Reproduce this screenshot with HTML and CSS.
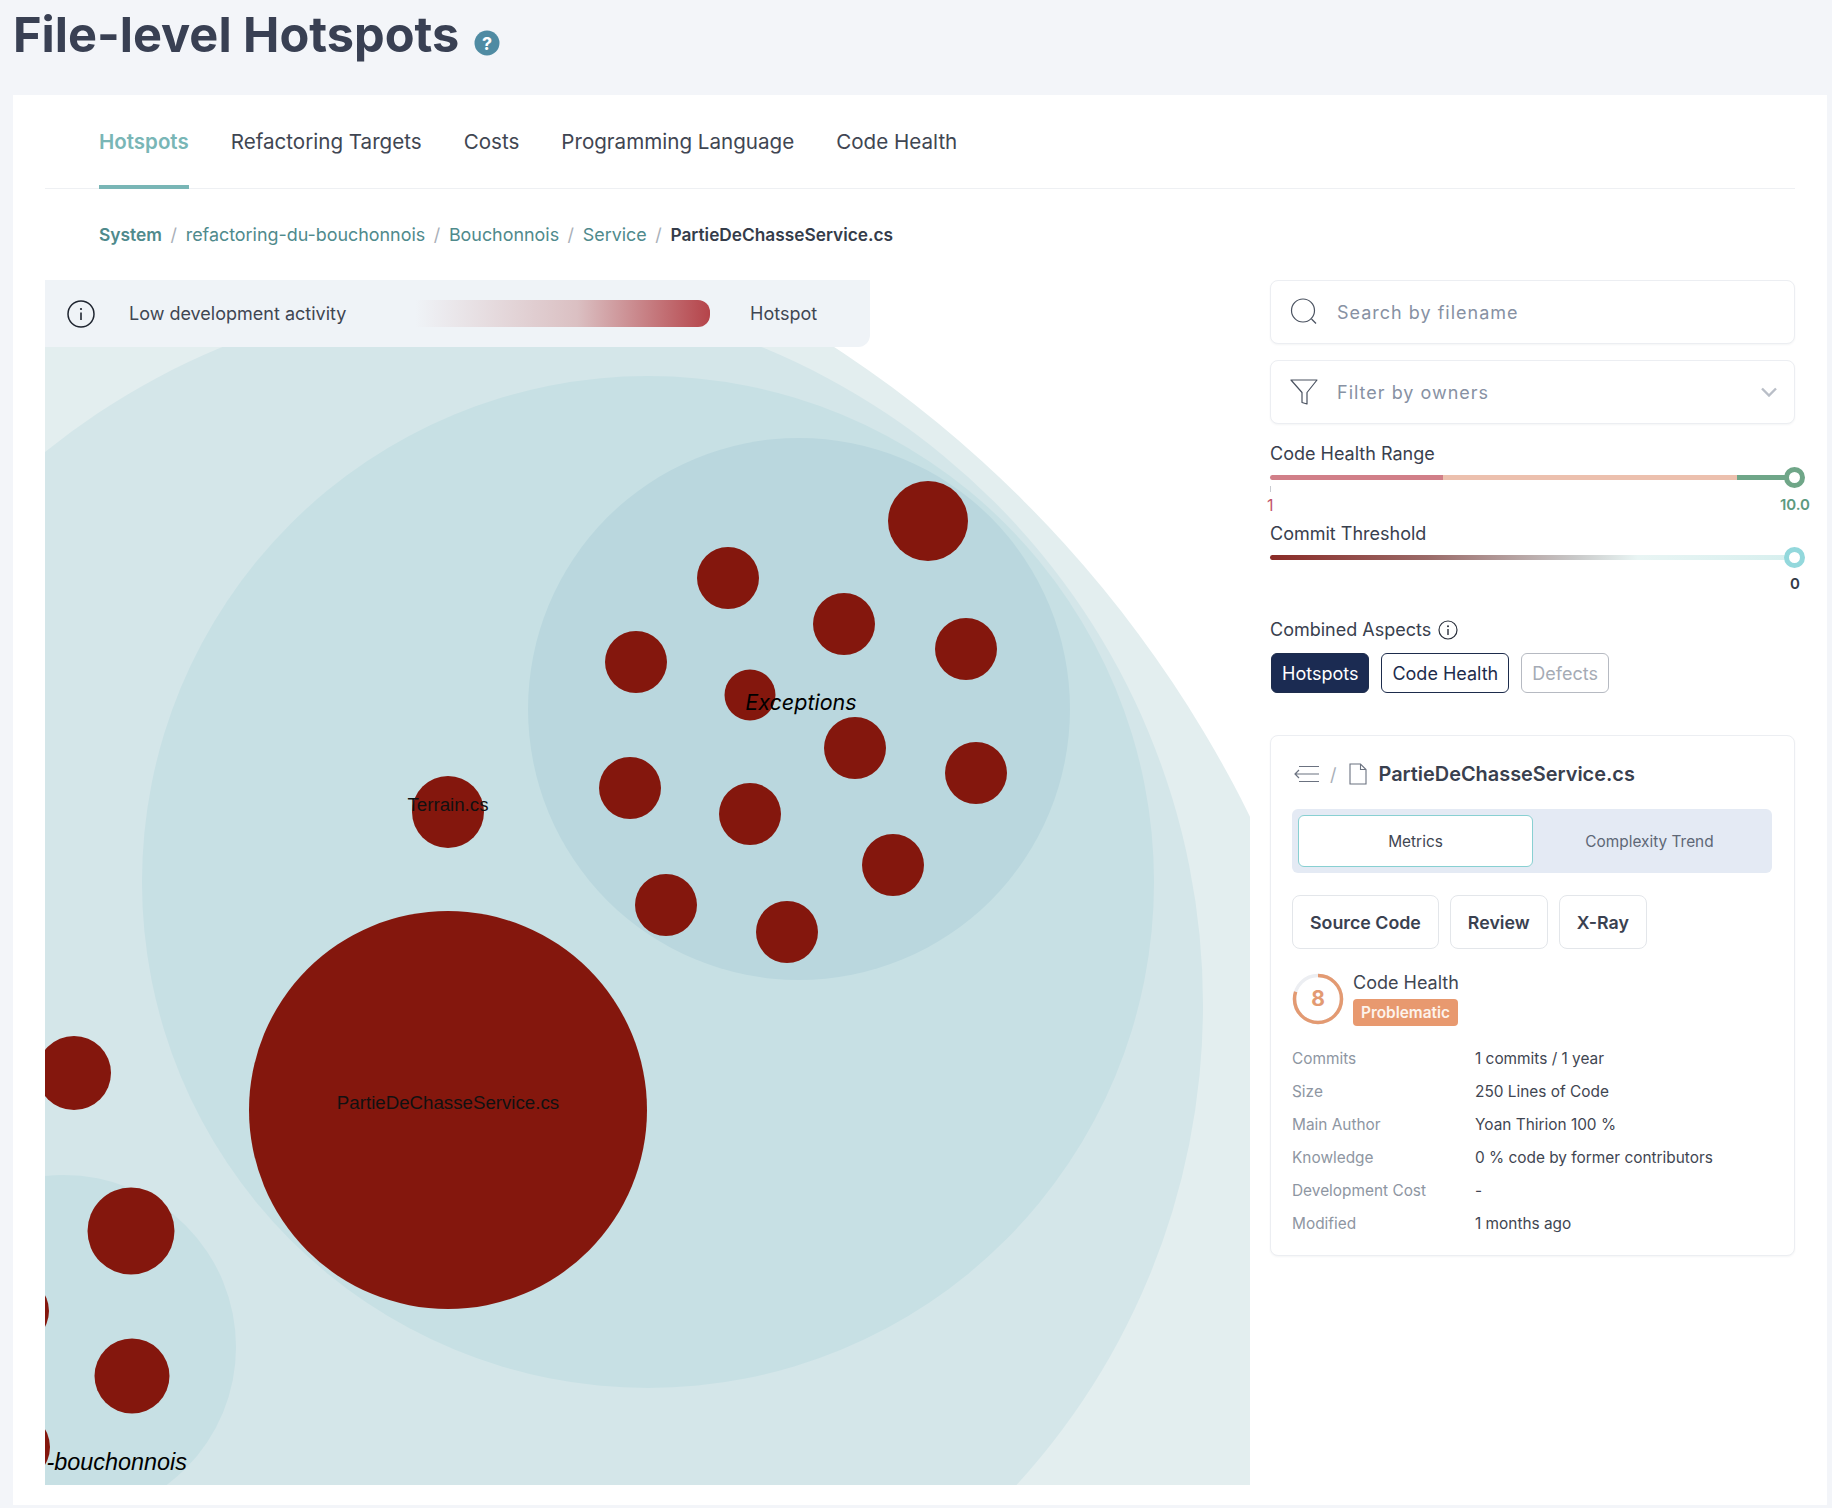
FILE: index.html
```html
<!DOCTYPE html>
<html lang="en">
<head>
  <meta charset="UTF-8" />
  <title>File-level Hotspots</title>
  <link rel="stylesheet" href="styles.css">
</head>
<body>
  <div class="page-head">
    <h1>File-level Hotspots</h1>
    <svg class="help" width="26" height="26" viewBox="0 0 26 26"><circle cx="13" cy="13" r="12.5" fill="#4f8ba3"/><text x="13" y="19.5" text-anchor="middle" class="help-mark">?</text></svg>
  </div>

  <div class="card">
    <div class="tabs">
      <a class="tab active">Hotspots</a>
      <a class="tab">Refactoring Targets</a>
      <a class="tab">Costs</a>
      <a class="tab">Programming Language</a>
      <a class="tab">Code Health</a>
    </div>

    <div class="crumbs">
      <a class="strong">System</a><span class="sep">/</span>
      <a>refactoring-du-bouchonnois</a><span class="sep">/</span>
      <a>Bouchonnois</a><span class="sep">/</span>
      <a>Service</a><span class="sep">/</span>
      <span class="current">PartieDeChasseService.cs</span>
    </div>

    <div class="main">
      <div class="map">
        <svg class="map-svg" width="1205" height="1205" viewBox="45 280 1205 1205">
          <rect x="45" y="280" width="1205" height="1205" fill="#fff"/>
          <circle cx="181" cy="1344" r="1192" fill="#e3eeef"/>
          <circle cx="492" cy="1005" r="711" fill="#d4e6e9"/>
          <circle cx="648" cy="882" r="506" fill="#c7e0e4"/>
          <circle cx="799" cy="709" r="271" fill="#bad7de"/>
          <circle cx="64" cy="1347" r="172" fill="#c7e0e4"/>
          <g fill="#84170d">
            <circle cx="928" cy="521" r="40"/>
            <circle cx="728" cy="578" r="31"/>
            <circle cx="844" cy="624" r="31"/>
            <circle cx="966" cy="649" r="31"/>
            <circle cx="636" cy="662" r="31"/>
            <circle cx="750" cy="695" r="25.5"/>
            <circle cx="855" cy="748" r="31"/>
            <circle cx="976" cy="773" r="31"/>
            <circle cx="630" cy="788" r="31"/>
            <circle cx="750" cy="814" r="31"/>
            <circle cx="893" cy="865" r="31"/>
            <circle cx="666" cy="905" r="31"/>
            <circle cx="787" cy="932" r="31"/>
            <circle cx="448" cy="812" r="36"/>
            <circle cx="448" cy="1110" r="199"/>
            <circle cx="74" cy="1073" r="37"/>
            <circle cx="131" cy="1231" r="43.5"/>
            <circle cx="132" cy="1376" r="37.5"/>
            <circle cx="16" cy="1311" r="33"/>
            <circle cx="16" cy="1447" r="34"/>
          </g>
          <text class="file-label" x="448" y="811" text-anchor="middle">Terrain.cs</text>
          <text class="file-label" x="448" y="1109" text-anchor="middle">PartieDeChasseService.cs</text>
          <text class="dir-label dir-inter" x="801" y="710" text-anchor="middle">Exceptions</text>
          <text class="dir-label" x="187" y="1470" text-anchor="end">-bouchonnois</text>
        </svg>

        <div class="legend">
          <svg width="28" height="28" viewBox="0 0 28 28"><circle cx="14" cy="14" r="13" fill="none" stroke="#1f2530" stroke-width="1.5"/><circle cx="14" cy="9" r="1.1" fill="#1f2530"/><path d="M14 12.5v7.5" stroke="#1f2530" stroke-width="1.6"/></svg>
          <span class="legend-low">Low development activity</span>
          <span class="legend-bar"></span>
          <span class="legend-high">Hotspot</span>
        </div>
      </div>

      <div class="side">
        <div class="field">
          <svg width="28" height="28" viewBox="0 0 28 28" fill="none" stroke="#4a5260" stroke-width="1.2"><circle cx="13" cy="12.5" r="11.5"/><path d="M21.5 21l4.5 4.5"/></svg>
          <span>Search by filename</span>
        </div>
        <div class="field">
          <svg width="28" height="28" viewBox="0 0 28 28" fill="none" stroke="#4a5260" stroke-width="1.2" stroke-linejoin="round"><path d="M1 2h26L17 14.5V26l-5-1.5v-10z"/></svg>
          <span>Filter by owners</span>
          <svg class="chev" width="16" height="10" viewBox="0 0 16 10" fill="none" stroke="#b9bec7" stroke-width="2.4"><path d="M1 1.5l7 7 7-7"/></svg>
        </div>

        <div class="slider first">
          <div class="slider-label">Code Health Range</div>
          <div class="track health"><i class="knob green"></i></div>
          <div class="tick"></div>
          <div class="ends"><span class="red">1</span><span class="green-text">10.0</span></div>
        </div>
        <div class="slider second">
          <div class="slider-label">Commit Threshold</div>
          <div class="track commits"><i class="knob teal"></i></div>
          <div class="ends single"><span class="zero">0</span></div>
        </div>

        <div class="aspects">
          Combined Aspects
          <svg width="20" height="20" viewBox="0 0 20 20"><circle cx="10" cy="10" r="9" fill="none" stroke="#2a303c" stroke-width="1.2"/><circle cx="10" cy="6.3" r="1" fill="#2a303c"/><path d="M10 9v6" stroke="#2a303c" stroke-width="1.4"/></svg>
        </div>
        <div class="chips">
          <span class="chip on">Hotspots</span>
          <span class="chip">Code Health</span>
          <span class="chip off">Defects</span>
        </div>

        <div class="panel">
          <div class="panel-title">
            <svg width="26" height="18" viewBox="0 0 26 18" fill="none" stroke="#6b7280" stroke-width="1.2"><path d="M5 1.5h20M1 9h24M5 16.5h20M5 5L1 9l4 4"/></svg>
            <span class="slash">/</span>
            <svg width="18" height="22" viewBox="0 0 18 22" fill="none" stroke="#6b7280" stroke-width="1.1"><path d="M1 1h10.5L17 6.5V21H1zM11.5 1v5.5H17"/></svg>
            <span class="panel-name">PartieDeChasseService.cs</span>
          </div>

          <div class="seg">
            <span class="seg-item on">Metrics</span>
            <span class="seg-item">Complexity Trend</span>
          </div>

          <div class="actions">
            <span class="action">Source Code</span>
            <span class="action">Review</span>
            <span class="action">X-Ray</span>
          </div>

          <div class="score">
            <svg width="52" height="52" viewBox="0 0 52 52">
              <circle cx="26" cy="26" r="23.5" fill="none" stroke="#eceef2" stroke-width="3.5"/>
              <circle cx="26" cy="26" r="23.5" fill="none" stroke="#e39a72" stroke-width="3.5" pathLength="100" stroke-dasharray="80 20" transform="rotate(-90 26 26)"/>
              <text class="score-num" x="26" y="33" text-anchor="middle">8</text>
            </svg>
            <div>
              <div class="score-name">Code Health</div>
              <span class="badge">Problematic</span>
            </div>
          </div>

          <dl class="facts">
            <dt>Commits</dt><dd>1 commits / 1 year</dd>
            <dt>Size</dt><dd>250 Lines of Code</dd>
            <dt>Main Author</dt><dd>Yoan Thirion 100 %</dd>
            <dt>Knowledge</dt><dd>0 % code by former contributors</dd>
            <dt>Development Cost</dt><dd>-</dd>
            <dt>Modified</dt><dd>1 months ago</dd>
          </dl>
        </div>
      </div>
    </div>
  </div>
</body>
</html>
```
FILE: styles.css
```css
* {
  box-sizing: border-box;
}

html, body {
  height: 100%;
}

body {
  margin: 0;
  background: #f3f5f9;
  font-family: Inter, "Liberation Sans", sans-serif;
  color: #39404e;
  overflow: hidden;
}

.page-head {
  height: 95px;
  padding: 5px 0 0 13px;
  display: flex;
  align-items: flex-start;
}

h1 {
  margin: 0;
  font-size: 48.7px;
  line-height: 60px;
  font-weight: 700;
  color: #394053;
}

.help {
  margin: 25px 0 0 15px;
}

.help-mark {
  font: bold 18px Inter, sans-serif;
  fill: #fff;
}

.card {
  height: 1410px;
  margin: 0 5px 0 13px;
  padding: 0 32px;
  background: #fff;
}

.tabs {
  display: flex;
  gap: 42px;
  height: 94px;
  padding-left: 54px;
  border-bottom: 1px solid #eef0f3;
}

.tab {
  height: 94px;
  padding-top: 34px;
  font-size: 20.6px;
  line-height: 26px;
  color: #3f4652;
}

.tab.active {
  color: #79b6b6;
  font-weight: 600;
  font-size: 20.5px;
  border-bottom: 4px solid #79b6b6;
}

.crumbs {
  height: 91px;
  padding: 33px 0 0 54px;
  font-size: 17.9px;
  line-height: 26px;
  color: #4f8a8c;
}

.crumbs .strong {
  font-weight: 600;
  font-size: 17.4px;
}

.sep {
  margin: 0 3.7px 0 8.5px;
  color: #a9afb8;
}

.current {
  color: #353c4a;
  font-weight: 600;
  font-size: 17.3px;
}

.main {
  display: flex;
  gap: 20px;
}

.map {
  position: relative;
  width: 1205px;
  height: 1205px;
  flex: none;
}

.map-svg {
  display: block;
}

.file-label {
  font: 18.7px "Liberation Sans", sans-serif;
  fill: #111;
}

.dir-label {
  font: italic 23.4px "Liberation Sans", sans-serif;
  fill: #000;
}

.dir-inter {
  font: italic 21.5px Inter, sans-serif;
}

.legend {
  position: absolute;
  left: 0;
  top: 0;
  width: 825px;
  height: 67px;
  display: flex;
  align-items: center;
  padding-left: 22px;
  background: #eff3f7;
  border-radius: 0 0 12px 0;
  font-size: 18px;
  color: #3f4652;
}

.legend-low {
  margin-left: 34px;
  width: 286px;
}

.legend-bar {
  width: 295px;
  height: 27px;
  border-radius: 0 12px 12px 0;
  background: linear-gradient(90deg, rgba(181, 68, 74, 0) 0%, rgba(210, 170, 172, 0.7) 55%, #b5444a 100%);
}

.legend-high {
  margin-left: 40px;
}

.side {
  width: 525px;
  flex: none;
}

.field {
  height: 64px;
  margin-bottom: 16px;
  padding: 0 17px 0 19px;
  display: flex;
  align-items: center;
  gap: 19px;
  background: #fff;
  border: 1px solid #eceef2;
  border-radius: 8px;
  box-shadow: 0 1px 2px rgba(40, 50, 70, 0.05);
  font-size: 18px;
  letter-spacing: 1px;
  color: #8791a3;
}

.chev {
  margin-left: auto;
}

.slider-label {
  font-size: 18px;
  line-height: 24px;
  color: #39404e;
}

.slider.first {
  margin-top: 18px;
}

.slider.second {
  margin-top: 7px;
}

.track {
  position: relative;
  height: 5px;
  margin-top: 9px;
  border-radius: 3px;
}

.health {
  background: linear-gradient(90deg, #d17f88 0 33%, #ecc0ae 33% 89%, #6fa688 89% 100%);
}

.commits {
  background: linear-gradient(90deg, #8a2a26 0%, #9a6a68 30%, #c8c8c8 58%, #e9f5f4 70%, #d6efee 100%);
}

.knob {
  position: absolute;
  right: -10px;
  top: -8px;
  width: 21px;
  height: 21px;
  background: #fff;
  border-radius: 50%;
  border: 5px solid #6fa688;
}

.knob.teal {
  border-color: #93d8dc;
}

.tick {
  width: 1px;
  height: 6px;
  margin-top: 6px;
  background: #c9ccd2;
}

.ends {
  display: flex;
  justify-content: space-between;
  margin-top: 3px;
  margin-right: -15px;
  margin-left: -3px;
  font-size: 15px;
  line-height: 20px;
}

.ends.single {
  justify-content: flex-end;
  margin-top: 14px;
  margin-right: -5px;
}

.red {
  color: #c2566a;
  font-size: 16px;
}

.green-text {
  color: #5d9a80;
  font-weight: 600;
}

.zero {
  font-weight: 600;
  color: #333a48;
}

.aspects {
  display: flex;
  align-items: center;
  gap: 7px;
  margin-top: 24px;
  font-size: 18px;
  line-height: 24px;
}

.chips {
  display: flex;
  gap: 12px;
  margin-top: 11px;
  padding-left: 1px;
}

.chip {
  height: 40px;
  padding: 0 10px;
  display: flex;
  align-items: center;
  font-size: 18px;
  color: #1d2c4c;
  border: 1px solid #1d2c4c;
  border-radius: 6px;
}

.chip.on {
  background: #1b2b52;
  color: #fff;
}

.chip.off {
  color: #a5abb5;
  border-color: #b6bac2;
}

.panel {
  margin-top: 42px;
  height: 521px;
  padding: 0 22px 0 21px;
  background: #fff;
  border: 1px solid #eceef2;
  border-radius: 8px;
  box-shadow: 0 1px 2px rgba(40, 50, 70, 0.05);
}

.panel-title {
  display: flex;
  align-items: center;
  height: 73px;
  padding: 3px 0 0 2px;
}

.slash {
  margin: 0 12px 0 10px;
  color: #a9afb8;
  font-size: 18px;
}

.panel-name {
  margin-left: 12px;
  font-size: 19.9px;
  font-weight: 600;
  color: #39404e;
}

.seg {
  display: flex;
  height: 64px;
  padding: 6px;
  background: #e4eaf4;
  border-radius: 6px;
}

.seg-item {
  flex: 1;
  display: flex;
  align-items: center;
  justify-content: center;
  font-size: 15.4px;
  color: #5e6776;
}

.seg-item.on {
  background: #fff;
  border: 1px solid #88d0d2;
  border-radius: 6px;
  color: #3f4652;
}

.actions {
  display: flex;
  gap: 11px;
  margin-top: 22px;
}

.action {
  height: 54px;
  padding: 0 17px;
  display: flex;
  align-items: center;
  background: #fff;
  border: 1px solid #e3e6ea;
  border-radius: 8px;
  font-size: 17.8px;
  font-weight: 600;
  color: #3a4150;
}

.score {
  display: flex;
  gap: 9px;
  margin-top: 24px;
}

.score-num {
  font: 700 21px Inter, sans-serif;
  fill: #e39a72;
}

.score-name {
  font-size: 18px;
  line-height: 26px;
  color: #3f4652;
  margin-top: -3px;
}

.badge {
  display: inline-block;
  height: 27px;
  margin-top: 3px;
  padding: 0 8px;
  background: #e8996f;
  border-radius: 4px;
  font-size: 15.4px;
  line-height: 27px;
  font-weight: 600;
  color: #fdf3ec;
}

.facts {
  display: grid;
  grid-template-columns: 183px 1fr;
  grid-auto-rows: 33px;
  margin: 16px 0 0;
  font-size: 15.4px;
  line-height: 33px;
}

.facts dt {
  color: #8e96a2;
}

.facts dd {
  margin: 0;
  color: #3f4652;
}
```
